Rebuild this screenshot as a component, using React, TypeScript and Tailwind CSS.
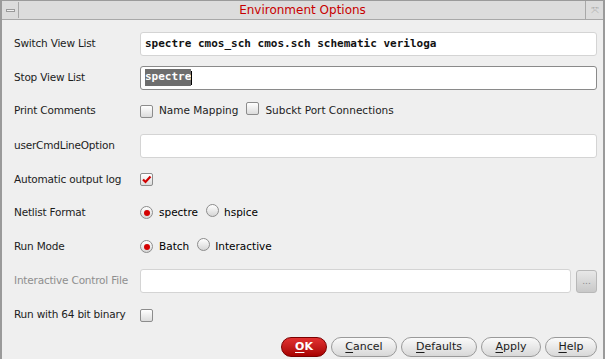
import type { ReactNode } from "react"

const font = { fontFamily: '"DejaVu Sans", "Liberation Sans", sans-serif' }

function Checkbox({ checked = false }: { checked?: boolean }) {
  return (
    <span className="inline-flex h-[13px] w-[13px] shrink-0 items-center justify-center rounded-[2px] border border-[#8c8c8c] bg-gradient-to-b from-[#ffffff] to-[#dcdcdc]">
      {checked ? (
        <svg width="11" height="11" viewBox="0 0 11 11">
          <path d="M2 5.5 L4.5 8 L9.5 2.5" fill="none" stroke="#d00000" strokeWidth="2.2" />
        </svg>
      ) : null}
    </span>
  )
}

function Radio({ checked = false }: { checked?: boolean }) {
  return (
    <span className="inline-flex h-[13px] w-[13px] shrink-0 items-center justify-center rounded-full border border-[#8c8c8c] bg-gradient-to-b from-[#ffffff] to-[#d6d6d6]">
      {checked ? <span className="h-[6px] w-[6px] rounded-full bg-[#d40000]" /> : null}
    </span>
  )
}

function Row({ label, h, disabled, children }: { label: string; h: string; disabled?: boolean; children?: ReactNode }) {
  return (
    <div className={`flex items-center ${h}`}>
      <div
        className={`w-[138px] shrink-0 whitespace-nowrap pl-[12px] tracking-[-0.2px] ${
          disabled ? "text-[#8e8e8e]" : "text-[#1c1c1c]"
        }`}
      >
        {label}
      </div>
      <div className="flex flex-1 items-center whitespace-nowrap pr-[6px]">{children}</div>
    </div>
  )
}

function Field({ focused, children }: { focused?: boolean; children?: ReactNode }) {
  return (
    <div
      className={`flex h-[24px] flex-1 items-center rounded-[3px] bg-white pl-[4px] text-[11px] ${
        focused ? "border border-[#8a8a8a]" : "border border-[#d4d4d4]"
      }`}
      style={{ fontFamily: '"DejaVu Sans Mono", "Liberation Mono", monospace' }}
    >
      {children}
    </div>
  )
}

function Btn({ first, rest, red, w }: { first: string; rest: string; red?: boolean; w: string }) {
  return (
    <div
      className={`flex h-[20px] ${w} items-center justify-center rounded-full border ${
        red
          ? "border-[#7a0000] bg-gradient-to-b from-[#e23030] to-[#a80000] font-bold text-white"
          : "border-[#9a9a9a] bg-gradient-to-b from-[#fafafa] to-[#d8d8d8] text-[#1c1c1c]"
      }`}
    >
      <span className="underline underline-offset-[2px]">{first}</span>
      <span>{rest}</span>
    </div>
  )
}

export default function App() {
  return (
    <div
      className="flex h-[359px] w-[605px] flex-col border-x-[2px] border-t border-[#9a9a9a] bg-[#efefef] text-[10.5px]"
      style={font}
    >
      <div className="flex h-[19px] shrink-0 items-stretch border-b border-[#a8a8a8] bg-[#dcdcdc]">
        <div className="m-[1px] flex w-[16px] items-center justify-center border-r border-[#a8a8a8]">
          <span className="h-[3px] w-[9px] border border-[#9a9a9a] bg-[#f0f0f0]" />
        </div>
        <div className="flex flex-1 items-center justify-center text-[12px] text-[#c80000]">Environment Options</div>
        <div className="flex w-[18px] items-center justify-center border-l border-[#a8a8a8] text-[10px] text-[#b0b0b0]">⤧</div>
      </div>

      <div className="flex flex-1 flex-col pt-[7px]">
        <Row label="Switch View List" h="h-[34px]">
          <Field>
            <span className="font-bold text-[#111]">spectre cmos_sch cmos.sch schematic veriloga</span>
          </Field>
        </Row>
        <Row label="Stop View List" h="h-[33px]">
          <Field focused>
            <span className="bg-[#6e6e6e] font-bold text-white">spectre</span>
            <span className="h-[14px] w-[1px] bg-black" />
          </Field>
        </Row>
        <Row label="Print Comments" h="h-[34px]">
          <Checkbox />
          <span className="ml-[6px] text-[#1c1c1c]">Name Mapping</span>
          <span className="ml-[8px]">
            <Checkbox />
          </span>
          <span className="ml-[6px] text-[#1c1c1c]">Subckt Port Connections</span>
        </Row>
        <Row label="userCmdLineOption" h="h-[35px]">
          <Field />
        </Row>
        <Row label="Automatic output log" h="h-[33px]">
          <Checkbox checked />
        </Row>
        <Row label="Netlist Format" h="h-[33px]">
          <Radio checked />
          <span className="ml-[6px]">spectre</span>
          <span className="ml-[8px]">
            <Radio />
          </span>
          <span className="ml-[5px]">hspice</span>
        </Row>
        <Row label="Run Mode" h="h-[35px]">
          <Radio checked />
          <span className="ml-[6px]">Batch</span>
          <span className="ml-[8px]">
            <Radio />
          </span>
          <span className="ml-[5px]">Interactive</span>
        </Row>
        <Row label="Interactive Control File" h="h-[34px]" disabled>
          <Field />
          <div className="ml-[5px] flex h-[23px] w-[21px] items-center justify-center rounded-[3px] border border-[#b8b8b8] bg-gradient-to-b from-[#e8e8e8] to-[#c8c8c8] text-[9px] leading-none text-[#8a8a8a]">
            ...
          </div>
        </Row>
        <Row label="Run with 64 bit binary" h="h-[34px]">
          <Checkbox />
        </Row>

        <div className="mt-auto flex justify-end gap-[4px] pb-[2px] pr-[6px] text-[11px]">
          <Btn first="O" rest="K" red w="w-[46px]" />
          <Btn first="C" rest="ancel" w="w-[66px]" />
          <Btn first="D" rest="efaults" w="w-[76px]" />
          <Btn first="A" rest="pply" w="w-[60px]" />
          <Btn first="H" rest="elp" w="w-[52px]" />
        </div>
      </div>
    </div>
  )
}
